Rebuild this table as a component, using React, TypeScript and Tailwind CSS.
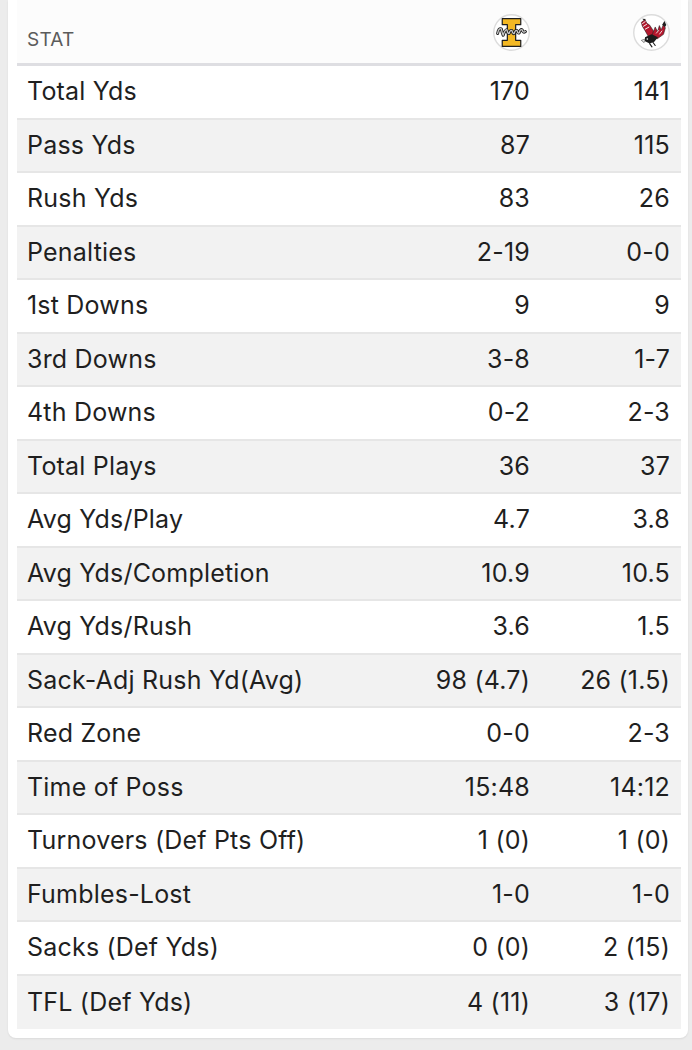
import React from 'react';

const rows: [string, string, string][] = [
  ['Total Yds', '170', '141'],
  ['Pass Yds', '87', '115'],
  ['Rush Yds', '83', '26'],
  ['Penalties', '2-19', '0-0'],
  ['1st Downs', '9', '9'],
  ['3rd Downs', '3-8', '1-7'],
  ['4th Downs', '0-2', '2-3'],
  ['Total Plays', '36', '37'],
  ['Avg Yds/Play', '4.7', '3.8'],
  ['Avg Yds/Completion', '10.9', '10.5'],
  ['Avg Yds/Rush', '3.6', '1.5'],
  ['Sack-Adj Rush Yd(Avg)', '98 (4.7)', '26 (1.5)'],
  ['Red Zone', '0-0', '2-3'],
  ['Time of Poss', '15:48', '14:12'],
  ['Turnovers (Def Pts Off)', '1 (0)', '1 (0)'],
  ['Fumbles-Lost', '1-0', '1-0'],
  ['Sacks (Def Yds)', '0 (0)', '2 (15)'],
  ['TFL (Def Yds)', '4 (11)', '3 (17)'],
];

const IdahoLogo = () => (
  <svg width="37" height="37" viewBox="0 0 40 40">
    <circle cx="20" cy="20" r="19.2" fill="#fff" stroke="#dcdcdc" strokeWidth="1.5" />
    {/* gold block I */}
    <path
      d="M10 5 H30 V11.5 H24.5 V28.5 H30 V35 H10 V28.5 H15.5 V11.5 H10 Z"
      fill="#f3b823"
      stroke="#1e1e1e"
      strokeWidth="1.3"
      strokeLinejoin="round"
    />
    {/* script across the I */}
    <path
      d="M5 21 Q6 15 9 16 Q10 21 11 23 Q13 17 15 17 Q16 22 17.5 21 Q18.5 17 20.5 18 Q21.5 22 23 21 Q24 17 26 18 Q27 22 28.5 20 Q29.5 16 31.5 17 Q32.5 21 35 19"
      fill="none"
      stroke="#1e1e1e"
      strokeWidth="3.2"
      strokeLinecap="round"
      strokeLinejoin="round"
    />
    <path
      d="M5 21 Q6 15 9 16 Q10 21 11 23 Q13 17 15 17 Q16 22 17.5 21 Q18.5 17 20.5 18 Q21.5 22 23 21 Q24 17 26 18 Q27 22 28.5 20 Q29.5 16 31.5 17 Q32.5 21 35 19"
      fill="none"
      stroke="#c9c9c9"
      strokeWidth="1.4"
      strokeLinecap="round"
      strokeLinejoin="round"
    />
  </svg>
);

const EaglesLogo = () => (
  <svg width="37" height="37" viewBox="0 0 40 40">
    <circle cx="20" cy="20" r="19.2" fill="#fff" stroke="#dcdcdc" strokeWidth="1.5" />
    {/* left wing, rising up-left */}
    <path d="M9 9 L13 6 L15 10 L18 12 L22 18 L22 24 L17 25 L13 18 L10 13 Z" fill="#b3172d" stroke="#222" strokeWidth="0.6" />
    <path d="M10 10.5 L13.5 8 M11 13.5 L15 11 M13 16.5 L17.5 14" stroke="#fff" strokeWidth="1" />
    <path d="M12 7 L10 5 L14 5.5 Z" fill="#1e1e1e" />
    {/* right wing, W shape */}
    <path d="M21 22 L24 14 L26.5 19 L28.5 12.5 L30.5 17 L33 11 L35 15 L33 22 L26 27 Z" fill="#b3172d" stroke="#222" strokeWidth="0.6" />
    <path d="M31.5 11.5 L34 7.5 L36 12 L34.5 14 Z" fill="#1e1e1e" />
    <path d="M25 21 L28 17.5 M28.5 22 L31.5 18" stroke="#fff" strokeWidth="0.9" />
    {/* body and head, lower left */}
    <path d="M13 25 L20 22 L27 25 L23 30 L18 32 L13 29.5 Z" fill="#1b1b1b" />
    <path d="M13 27 L9 28.5 L12 31 Z" fill="#eaeaea" stroke="#222" strokeWidth="0.5" />
    <circle cx="15.5" cy="27" r="0.9" fill="#fff" />
    <path d="M18 32 L20.5 35.5 M21.5 30.5 L24 34" stroke="#1b1b1b" strokeWidth="1.2" strokeLinecap="round" />
  </svg>
);

export default function App() {
  return (
    <div
      className="min-h-[1050px] bg-[#ececec] pl-2 pr-1"
      style={{ fontFamily: 'Inter, "Liberation Sans", Arial, sans-serif' }}
    >
      <div className="bg-white rounded-b-[8px] pl-[9px] pr-[7px] pb-[9px] shadow-[0_1px_2px_rgba(0,0,0,0.08)]">
        {/* Header */}
        <div className="flex h-[66px] bg-[#fcfcfc] border-b-[3px] border-[#dedee2] pr-[11px]">
          <div className="flex-1 pl-[10px] pt-[30px] text-[19px] leading-[19px] tracking-[0.2px] text-[#5b5b5b] uppercase">
            Stat
          </div>
          <div className="w-[140px] flex justify-end pt-[14px]">
            <IdahoLogo />
          </div>
          <div className="w-[140px] flex justify-end pt-[14px]">
            <EaglesLogo />
          </div>
        </div>

        {/* Rows */}
        {rows.map(([label, a, b], i) => (
          <div
            key={label}
            className={`flex items-center h-[53.5px] pr-[11px] text-[25px] tracking-[0.2px] text-[#1f1f1f] ${
              i % 2 === 1 ? 'bg-[#f2f2f2]' : 'bg-white'
            } ${i < rows.length - 1 ? 'border-b-2 border-[#e6e6e6]' : ''}`}
          >
            <div className="flex-1 pl-[10px] whitespace-nowrap">{label}</div>
            <div className="w-[140px] text-right whitespace-nowrap">{a}</div>
            <div className="w-[140px] text-right whitespace-nowrap">{b}</div>
          </div>
        ))}
      </div>
    </div>
  );
}
